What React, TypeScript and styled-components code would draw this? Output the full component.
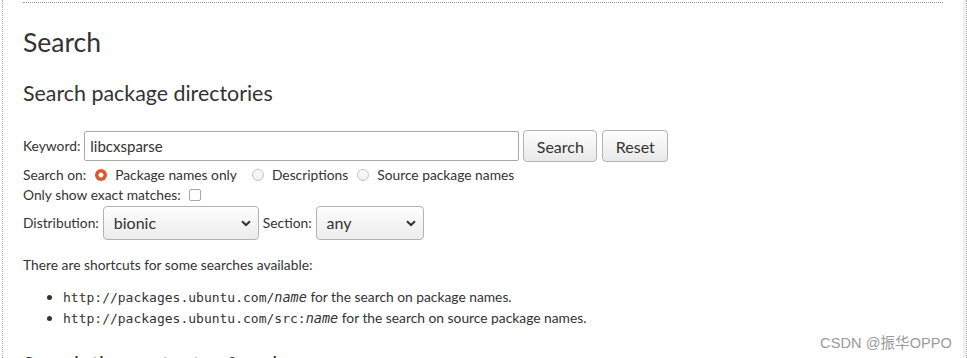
import styled, { createGlobalStyle } from "styled-components";

const Global = createGlobalStyle`
  body {
    margin: 0;
    background: #fff;
    font-family: "Lato", "Noto Sans", sans-serif;
    color: #333;
    overflow: hidden;
  }
`;

const Frame = styled.div`
  position: relative;
  margin-left: 2px;
  width: 965px;
  height: 358px;
  box-sizing: border-box;
  border-left: 1px dotted #aaa;
  border-right: 1px dotted #aaa;
  box-shadow: inset -3px 0 0 #f0f0f0;
  padding: 2px 23px 0 20px;
  overflow: hidden;
`;

const Content = styled.div`
  border-top: 1px dotted #999;
`;

const Title = styled.h1`
  margin: 22px 0 0;
  font-size: 26.5px;
  line-height: 34px;
  font-weight: 400;
`;

const SubTitle = styled.h2<{ $gap: number }>`
  margin: ${(p) => p.$gap}px 0 0;
  font-size: 21.4px;
  line-height: 26px;
  font-weight: 400;
  white-space: nowrap;
`;

const Form = styled.form`
  margin-top: 24px;
  font-size: 13.8px;
  line-height: 20px;
`;

const Row = styled.div<{ $h?: number; $mt?: number }>`
  display: flex;
  align-items: center;
  height: ${(p) => p.$h ?? 20}px;
  margin-top: ${(p) => p.$mt ?? 0}px;
  white-space: nowrap;
`;

const Label = styled.span<{ $ml?: number }>`
  margin-left: ${(p) => p.$ml ?? 0}px;
  margin-right: 4px;
`;

const TextInput = styled.div`
  box-sizing: border-box;
  width: 435px;
  height: 30px;
  border: 1px solid #a9a9a9;
  border-radius: 2px;
  padding: 0 5px;
  display: flex;
  align-items: center;
  font-size: 15px;
`;

const Button = styled.button<{ $w: number; $ml: number }>`
  box-sizing: border-box;
  width: ${(p) => p.$w}px;
  height: 32px;
  margin-left: ${(p) => p.$ml}px;
  border: 1px solid #b3b3b3;
  border-radius: 4px;
  background: linear-gradient(#fdfdfd, #e9e9e9);
  font-family: inherit;
  font-size: 16px;
  color: #333;
  padding: 0;
`;

const Radio = styled.span<{ $checked?: boolean; $ml: number }>`
  box-sizing: border-box;
  width: 12px;
  height: 12px;
  margin: 0 8px 0 ${(p) => p.$ml}px;
  border-radius: 50%;
  flex: none;
  ${(p) =>
    p.$checked
      ? `background: radial-gradient(circle, #fff 0 2.2px, #e2572a 2.8px);`
      : `border: 1px solid #c4c4c4; background: linear-gradient(#fafafa, #f0f0f0);`}
`;

const Check = styled.span`
  box-sizing: border-box;
  width: 12px;
  height: 12px;
  margin-left: 4px;
  border: 1px solid #a6a6a6;
  border-radius: 2px;
  background: #fff;
`;

const Select = styled.div<{ $w: number }>`
  box-sizing: border-box;
  width: ${(p) => p.$w}px;
  height: 34px;
  border: 1px solid #b3b3b3;
  border-radius: 4px;
  background: linear-gradient(#fdfdfd, #ececec);
  display: flex;
  align-items: center;
  justify-content: space-between;
  padding: 0 7px 0 10px;
  font-size: 16px;
`;

const Para = styled.p`
  margin: 15px 0 0;
  font-size: 13.8px;
  line-height: 20px;
`;

const List = styled.ul`
  margin: 11px 0 0;
  padding-left: 40px;
  font-size: 13.8px;
  line-height: 21px;
  li {
    white-space: nowrap;
  }
`;

const Code = styled.code`
  font-family: "DejaVu Sans Mono", monospace;
  font-size: 13px;
  line-height: 1;
`;

const Var = styled.var`
  font-style: italic;
  font-size: 13.5px;
`;

const Watermark = styled.div`
  position: absolute;
  right: 14px;
  top: 331px;
  font-family: "Liberation Sans", "Noto Sans CJK SC", sans-serif;
  font-size: 14.5px;
  color: #9a9a9a;
  letter-spacing: 0.1px;
`;

function Chevron() {
  return (
    <svg width="10" height="7" viewBox="0 0 10 7">
      <path d="M1 1.2 L5 5 L9 1.2" fill="none" stroke="#333" strokeWidth="2" />
    </svg>
  );
}

export default function App() {
  return (
    <>
      <Global />
      <Frame>
        <Content>
          <Title>Search</Title>
          <SubTitle $gap={21}>Search package directories</SubTitle>
          <Form>
            <Row $h={32}>
              <Label>Keyword:</Label>
              <TextInput>libcxsparse</TextInput>
              <Button type="button" $w={74} $ml={4}>
                Search
              </Button>
              <Button type="button" $w={66} $ml={5}>
                Reset
              </Button>
            </Row>
            <Row $mt={3}>
              <Label>Search on:</Label>
              <Radio $checked $ml={5} />
              <span>Package names only</span>
              <Radio $ml={15} />
              <span>Descriptions</span>
              <Radio $ml={9} />
              <span>Source package names</span>
            </Row>
            <Row>
              <Label>Only show exact matches:</Label>
              <Check />
            </Row>
            <Row $h={34} $mt={1}>
              <Label>Distribution:</Label>
              <Select $w={156}>
                bionic
                <Chevron />
              </Select>
              <Label $ml={4}>Section:</Label>
              <Select $w={108}>
                any
                <Chevron />
              </Select>
            </Row>
          </Form>
          <Para>There are shortcuts for some searches available:</Para>
          <List>
            <li>
              <Code>
                http://packages.ubuntu.com/<Var>name</Var>
              </Code>{" "}
              for the search on package names.
            </li>
            <li>
              <Code>
                http://packages.ubuntu.com/src:<Var>name</Var>
              </Code>{" "}
              for the search on source package names.
            </li>
          </List>
          <SubTitle $gap={23}>Search the contents of packages</SubTitle>
        </Content>
        <Watermark>CSDN @振华OPPO</Watermark>
      </Frame>
    </>
  );
}
